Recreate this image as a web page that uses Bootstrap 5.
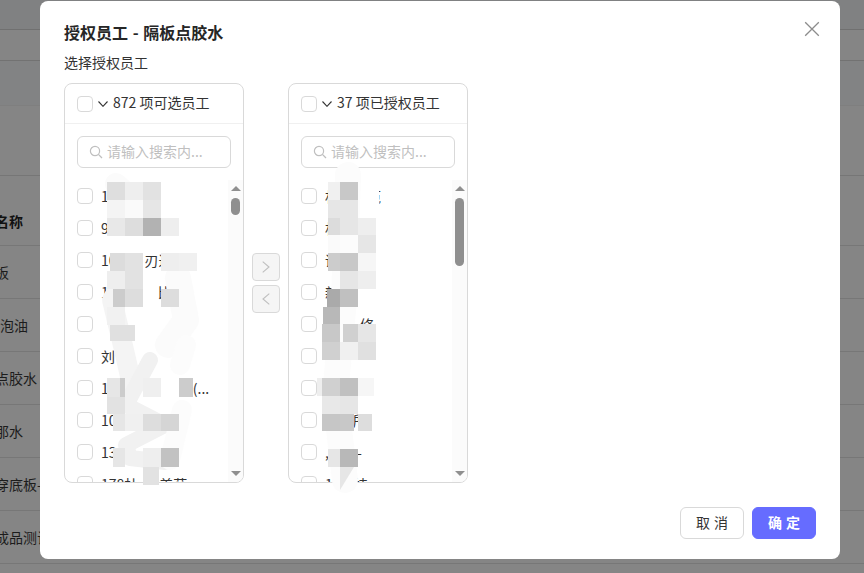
<!DOCTYPE html>
<html lang="zh">
<head>
<meta charset="utf-8">
<title>授权员工</title>
<link href="https://cdn.jsdelivr.net/npm/bootstrap@5.3.0/dist/css/bootstrap.min.css" rel="stylesheet">
<style>
html,body{height:100%;margin:0;overflow:hidden}
body{background:#858585;font-family:"Noto Sans CJK SC","Noto Sans",sans-serif;font-size:14px;color:#262626;position:relative}
.bk-top{height:30px;background:#808182;border-bottom:1px solid #707070}
.bk-band{height:31px;border-bottom:1px solid #727272}
.bk-band2{height:45px;background:#828384;border-bottom:1px solid #7f7f7f}
.bk-band3{height:70px;border-bottom:1px solid #767676}
.bk-headrow{height:70px;border-bottom:1px solid #777;display:flex;align-items:flex-end;font-weight:700}
.bk-row{height:53px;border-bottom:1px solid #777;display:flex;align-items:center;color:#1c1c1c}
.bk-end{height:10px;background:#858585}
.bk-txt{margin-left:-5px;white-space:nowrap}
.bk-shift{padding-left:5px}
.bk-headrow .bk-txt{padding-bottom:13px;color:#111}
.tp-dialog{position:absolute;left:40px;top:1px;width:800px;height:558px;border:0;border-radius:8px;padding:0 24px;background:#fff;overflow:hidden}
.tp-title{font-size:16px;font-weight:600;line-height:24px;margin:19px 0 0;color:#262626;word-spacing:1px}
.tp-label{line-height:22px;margin:7px 0 10px;color:#333}
.tp-close{position:absolute;right:20px;top:20px;background:none;border:0;padding:0;width:16px;height:16px;line-height:0}
.tp-panel{width:180px;height:400px;border:1px solid #d9d9d9;border-radius:8px;overflow:hidden;background:#fff}
.tp-head{height:40px;border-bottom:1px solid #f0f0f0;padding:0 12px;gap:5px;flex:none;color:#333}
.tp-head span{padding-bottom:2px}
.tp-check.form-check-input{width:16px;height:16px;margin:0;border:1px solid #d9d9d9;border-radius:4px;flex:none;float:none}
.tp-search{height:32px;border:1px solid #d9d9d9;border-radius:6px;margin:12px;padding:0 11px;gap:4px;flex:none}
.tp-input{border:0;outline:0;padding:0 0 2px;width:110px;font-size:14px;color:#333;background:transparent;min-width:0}
.tp-input::placeholder{color:#bfbfbf;opacity:1}
.tp-body{flex:1;min-height:0}
.tp-items{flex:1;min-width:0;overflow:hidden}
.tp-item{height:32px;padding-left:12px;gap:8px;color:#333;white-space:nowrap;flex:none}
.tp-track{width:15px;flex:none;background:#fbfbfb}
.tp-up{width:0;height:0;border:5px solid transparent;border-top:0;border-bottom:5px solid #8f8f8f;margin:6px auto 7px}
.tp-down{width:0;height:0;border:5px solid transparent;border-bottom:0;border-top:5px solid #8f8f8f;margin:auto auto 6px}
.tp-thumb{width:9px;margin:0 auto;border-radius:5px;background:#8f8f8f}
.tp-thumb-s{height:17px}
.tp-thumb-l{height:68px}
.tp-mid{width:44px;gap:4px;flex:none;align-items:center;justify-content:center}
.tp-move.btn{width:28px;height:28px;padding:0;background:#f5f5f5;border:1px solid #d9d9d9;border-radius:4px;display:flex;align-items:center;justify-content:center;opacity:1}
.tp-foot{position:absolute;right:24px;bottom:20px;gap:8px}
.tp-btn.btn{width:64px;height:32px;padding:0 0 2px;font-size:14px;border-radius:6px;line-height:28px;word-spacing:1px}
.tp-cancel.btn{background:#fff;border:1px solid #d9d9d9;color:#333}
.tp-ok.btn{background:#666cff;border:1px solid #666cff;color:#fff;font-weight:600}
.tp-mosaic{position:absolute;left:0;top:0;width:800px;height:558px;pointer-events:none}
</style>
</head>
<body>
<div class="bk-top"></div>
<div class="bk-band"></div>
<div class="bk-band bk-band2"></div>
<div class="bk-band3"></div>
<div class="bk-headrow"><span class="bk-txt">名称</span></div>
<div class="bk-row"><span class="bk-txt">板</span></div>
<div class="bk-row"><span class="bk-txt bk-shift">泡油</span></div>
<div class="bk-row"><span class="bk-txt">点胶水</span></div>
<div class="bk-row"><span class="bk-txt">那水</span></div>
<div class="bk-row"><span class="bk-txt">穿底板-</span></div>
<div class="bk-row"><span class="bk-txt">成品测试</span></div>
<div class="bk-end"></div>

<div class="modal-content tp-dialog">
  <button type="button" class="tp-close" aria-label="关闭">
    <svg width="16" height="16" viewBox="0 0 16 16"><path d="M1.2 1.2 14.8 14.8M14.8 1.2 1.2 14.8" stroke="#8c8c8c" stroke-width="1.3" fill="none"/></svg>
  </button>
  <h5 class="tp-title">授权员工 - 隔板点胶水</h5>
  <div class="tp-label">选择授权员工</div>
  <div class="d-flex">
    <div class="tp-panel d-flex flex-column">
      <div class="tp-head d-flex align-items-center">
        <input class="form-check-input tp-check" type="checkbox">
        <svg width="10" height="6" viewBox="0 0 10 6"><path d="M.5.5 5 5.3 9.5.5" stroke="#333" stroke-width="1.1" fill="none"/></svg>
        <span>872 项可选员工</span>
      </div>
      <div class="tp-search d-flex align-items-center">
        <svg width="14" height="14" viewBox="0 0 14 14"><circle cx="6" cy="6" r="4.6" stroke="#bfbfbf" stroke-width="1.2" fill="none"/><path d="M9.4 9.4 13 13" stroke="#bfbfbf" stroke-width="1.3"/></svg>
        <input class="tp-input" placeholder="请输入搜索内...">
      </div>
      <div class="tp-body d-flex">
        <div class="tp-items d-flex flex-column">
          <div class="tp-item d-flex align-items-center"><input class="form-check-input tp-check" type="checkbox"><span>1&emsp;力</span></div>
          <div class="tp-item d-flex align-items-center"><input class="form-check-input tp-check" type="checkbox"><span>9</span></div>
          <div class="tp-item d-flex align-items-center"><input class="form-check-input tp-check" type="checkbox"><span>10&emsp;&emsp;刃进</span></div>
          <div class="tp-item d-flex align-items-center"><input class="form-check-input tp-check" type="checkbox"><span>1&emsp;&emsp;&emsp;&ensp;比</span></div>
          <div class="tp-item d-flex align-items-center"><input class="form-check-input tp-check" type="checkbox"><span>‘</span></div>
          <div class="tp-item d-flex align-items-center"><input class="form-check-input tp-check" type="checkbox"><span>刘</span></div>
          <div class="tp-item d-flex align-items-center"><input class="form-check-input tp-check" type="checkbox"><span>1&emsp;&emsp;&emsp;&emsp;&emsp;&emsp;(...</span></div>
          <div class="tp-item d-flex align-items-center"><input class="form-check-input tp-check" type="checkbox"><span>10</span></div>
          <div class="tp-item d-flex align-items-center"><input class="form-check-input tp-check" type="checkbox"><span>13</span></div>
          <div class="tp-item d-flex align-items-center"><input class="form-check-input tp-check" type="checkbox"><span>178杜&emsp;&ensp;美菇</span></div>
        </div>
        <div class="tp-track d-flex flex-column">
          <div class="tp-up"></div>
          <div class="tp-thumb tp-thumb-s"></div>
          <div class="tp-down"></div>
        </div>
      </div>
    </div>

    <div class="tp-mid d-flex flex-column">
      <button type="button" class="btn tp-move" disabled aria-label="右移"><svg width="8" height="12" viewBox="0 0 8 12"><path d="M.7.7 7 6 .7 11.3" stroke="#bfbfbf" stroke-width="1.1" fill="none"/></svg></button>
      <button type="button" class="btn tp-move" disabled aria-label="左移"><svg width="8" height="12" viewBox="0 0 8 12"><path d="M7.3.7 1 6l6.3 5.3" stroke="#bfbfbf" stroke-width="1.1" fill="none"/></svg></button>
    </div>

    <div class="tp-panel d-flex flex-column">
      <div class="tp-head d-flex align-items-center">
        <input class="form-check-input tp-check" type="checkbox">
        <svg width="10" height="6" viewBox="0 0 10 6"><path d="M.5.5 5 5.3 9.5.5" stroke="#333" stroke-width="1.1" fill="none"/></svg>
        <span>37 项已授权员工</span>
      </div>
      <div class="tp-search d-flex align-items-center">
        <svg width="14" height="14" viewBox="0 0 14 14"><circle cx="6" cy="6" r="4.6" stroke="#bfbfbf" stroke-width="1.2" fill="none"/><path d="M9.4 9.4 13 13" stroke="#bfbfbf" stroke-width="1.3"/></svg>
        <input class="tp-input" placeholder="请输入搜索内...">
      </div>
      <div class="tp-body d-flex">
        <div class="tp-items d-flex flex-column">
          <div class="tp-item d-flex align-items-center"><input class="form-check-input tp-check" type="checkbox"><span>杉&emsp;&emsp;范</span></div>
          <div class="tp-item d-flex align-items-center"><input class="form-check-input tp-check" type="checkbox"><span>杉</span></div>
          <div class="tp-item d-flex align-items-center"><input class="form-check-input tp-check" type="checkbox"><span>诸</span></div>
          <div class="tp-item d-flex align-items-center"><input class="form-check-input tp-check" type="checkbox"><span>新</span></div>
          <div class="tp-item d-flex align-items-center"><input class="form-check-input tp-check" type="checkbox"><span>&emsp;&emsp;&ensp;修</span></div>
          <div class="tp-item d-flex align-items-center"><input class="form-check-input tp-check" type="checkbox"><span>&ensp;邱</span></div>
          <div class="tp-item d-flex align-items-center"><input class="form-check-input tp-check" type="checkbox"><span>&emsp;&emsp;&ensp;:</span></div>
          <div class="tp-item d-flex align-items-center"><input class="form-check-input tp-check" type="checkbox"><span>&emsp;&emsp;所</span></div>
          <div class="tp-item d-flex align-items-center"><input class="form-check-input tp-check" type="checkbox"><span>,&emsp;&emsp;-</span></div>
          <div class="tp-item d-flex align-items-center"><input class="form-check-input tp-check" type="checkbox"><span>1&emsp;&ensp;枝</span></div>
        </div>
        <div class="tp-track d-flex flex-column">
          <div class="tp-up"></div>
          <div class="tp-thumb tp-thumb-l"></div>
          <div class="tp-down"></div>
        </div>
      </div>
    </div>
  </div>

  <svg class="tp-mosaic" viewBox="40 1 800 558" aria-hidden="true">
    <g fill="none" stroke-linecap="round" stroke-linejoin="round">
      <path d="M116 184 150 215" stroke="#fbfbfb" stroke-width="22"/>
      <path d="M178 278 186 320 168 345" stroke="#fbfbfb" stroke-width="26"/>
      <path d="M130 270 112 300 124 350 132 385" stroke="#f4f4f4" stroke-width="20"/>
      <path d="M150 360 126 405 165 425 126 445 130 458 165 462" stroke="#f1f1f1" stroke-width="16"/>
      <path d="M186 345 180 365" stroke="#fcfcfc" stroke-width="20"/>
      <path d="M182 410 170 460" stroke="#fcfcfc" stroke-width="20"/>
      <path d="M348 175 344 300 335 395 345 480" stroke="#fcfcfc" stroke-width="26"/>
      <path d="M372 190 374 260" stroke="#fff" stroke-width="14"/>
    </g>
    <g>
      <rect x="107" y="182" width="18" height="18" fill="#dedede"/><rect x="125" y="182" width="18" height="18" fill="#eee"/><rect x="143" y="182" width="18" height="18" fill="#e2e2e2"/>
      <rect x="107" y="200" width="18" height="18" fill="#f4f4f4"/><rect x="125" y="200" width="18" height="18" fill="#fafafa"/><rect x="143" y="200" width="18" height="18" fill="#e6e6e6"/>
      <rect x="107" y="218" width="18" height="18" fill="#e8e8e8"/><rect x="125" y="218" width="18" height="18" fill="#ddd"/><rect x="143" y="218" width="18" height="18" fill="#b2b2b2"/><rect x="161" y="218" width="18" height="18" fill="#eee"/>
      <rect x="110" y="253" width="15" height="18" fill="#dcdcdc"/><rect x="125" y="253" width="18" height="18" fill="#e2e2e2"/><rect x="161" y="253" width="18" height="18" fill="#eee"/><rect x="179" y="253" width="18" height="18" fill="#f0f0f0"/>
      <rect x="107" y="271" width="18" height="18" fill="#eee"/><rect x="125" y="271" width="18" height="18" fill="#e2e2e2"/>
      <rect x="113" y="289" width="12" height="18" fill="#ccc"/><rect x="125" y="289" width="18" height="18" fill="#ddd"/><rect x="161" y="289" width="18" height="18" fill="#ddd"/>
      <rect x="107" y="307" width="18" height="18" fill="#f1f1f1"/>
      <rect x="110" y="325" width="25" height="16" fill="#e0e0e0"/>
      <rect x="107" y="378" width="13" height="19" fill="#e6e6e6"/><rect x="120" y="378" width="5" height="19" fill="#ccc"/><rect x="143" y="378" width="18" height="19" fill="#efefef"/><rect x="179" y="378" width="14" height="19" fill="#ccc"/>
      <rect x="107" y="397" width="18" height="17" fill="#e2e2e2"/>
      <rect x="113" y="414" width="12" height="17" fill="#e6e6e6"/><rect x="125" y="414" width="18" height="17" fill="#f0f0f0"/><rect x="143" y="414" width="18" height="17" fill="#ddd"/><rect x="161" y="414" width="18" height="17" fill="#d5d5d5"/>
      <rect x="113" y="448" width="12" height="19" fill="#e6e6e6"/><rect x="143" y="448" width="18" height="19" fill="#eee"/><rect x="161" y="448" width="18" height="19" fill="#c2c2c2"/>
      <rect x="143" y="467" width="16" height="18" fill="#e2e2e2"/>

      <rect x="328" y="182" width="12" height="18" fill="#f0f0f0"/><rect x="340" y="182" width="18" height="18" fill="#c8c8c8"/>
      <rect x="328" y="200" width="12" height="18" fill="#e6e6e6"/><rect x="340" y="200" width="18" height="18" fill="#e6e6e6"/>
      <rect x="328" y="218" width="12" height="17" fill="#dcdcdc"/><rect x="340" y="218" width="18" height="17" fill="#e6e6e6"/><rect x="358" y="218" width="18" height="17" fill="#eee"/>
      <rect x="328" y="235" width="12" height="18" fill="#fafafa"/><rect x="358" y="235" width="18" height="18" fill="#e6e6e6"/>
      <rect x="328" y="253" width="12" height="18" fill="#ccc"/><rect x="340" y="253" width="18" height="18" fill="#c8c8c8"/><rect x="358" y="253" width="18" height="18" fill="#f6f6f6"/>
      <rect x="340" y="271" width="18" height="18" fill="#e6e6e6"/><rect x="358" y="271" width="18" height="18" fill="#eee"/>
      <rect x="327" y="289" width="13" height="18" fill="#aaa"/><rect x="340" y="289" width="18" height="18" fill="#c0c0c0"/>
      <rect x="323" y="307" width="17" height="17" fill="#b8b8b8"/>
      <rect x="322" y="324" width="18" height="18" fill="#c8c8c8"/><rect x="343" y="324" width="15" height="18" fill="#d0d0d0"/><rect x="358" y="324" width="18" height="18" fill="#e6e6e6"/>
      <rect x="322" y="342" width="18" height="18" fill="#d0d0d0"/><rect x="340" y="342" width="18" height="18" fill="#f0f0f0"/><rect x="358" y="342" width="18" height="18" fill="#e0e0e0"/>
      <rect x="317" y="378" width="5" height="18" fill="#eee"/><rect x="322" y="378" width="18" height="18" fill="#d0d0d0"/><rect x="340" y="378" width="18" height="18" fill="#c0c0c0"/><rect x="358" y="378" width="16" height="18" fill="#f6f6f6"/>
      <rect x="322" y="396" width="18" height="18" fill="#e8e8e8"/><rect x="340" y="396" width="18" height="18" fill="#e6e6e6"/>
      <rect x="322" y="414" width="18" height="17" fill="#c6c6c6"/><rect x="340" y="414" width="14" height="17" fill="#c8c8c8"/><rect x="358" y="414" width="14" height="17" fill="#ddd"/>
      <rect x="328" y="449" width="12" height="18" fill="#e6e6e6"/><rect x="340" y="449" width="18" height="18" fill="#b8b8b8"/>
      <path d="M340 467h14l-14 23z" fill="#e6e6e6"/>
    </g>
  </svg>

  <div class="tp-foot d-flex">
    <button type="button" class="btn tp-btn tp-cancel">取 消</button>
    <button type="button" class="btn tp-btn tp-ok">确 定</button>
  </div>
</div>
<script src="https://cdn.jsdelivr.net/npm/bootstrap@5.3.0/dist/js/bootstrap.bundle.min.js"></script>
</body>
</html>
